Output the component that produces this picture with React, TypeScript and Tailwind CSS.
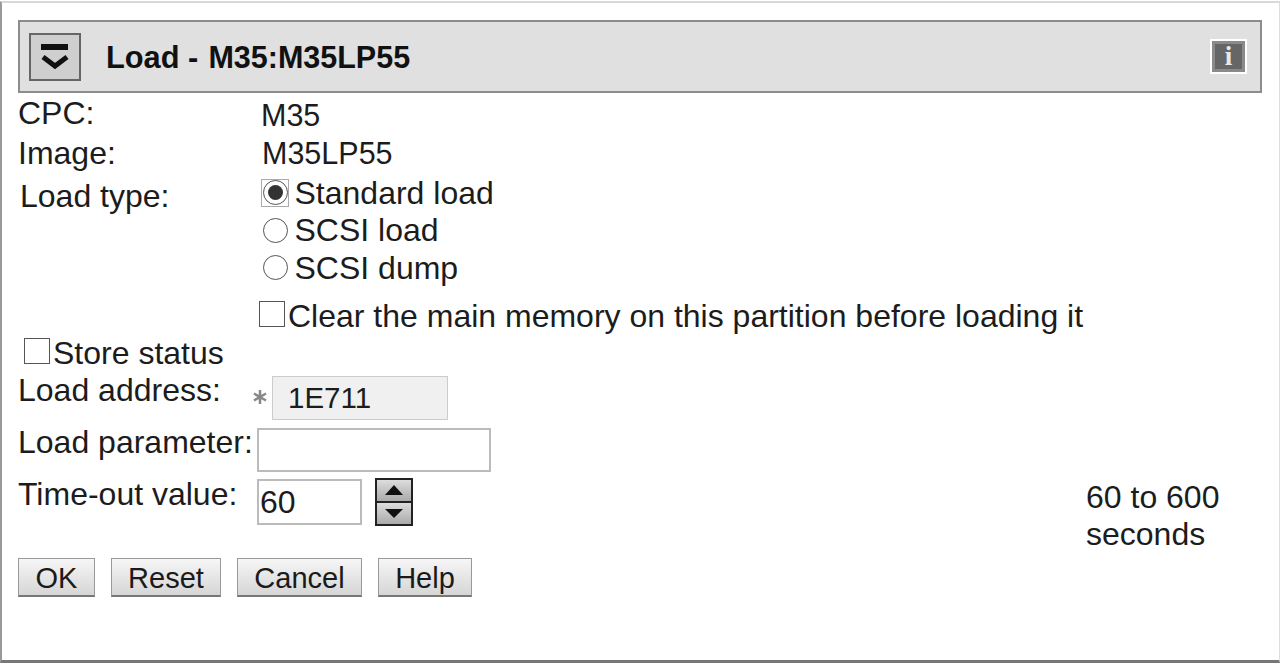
import type { ReactNode } from "react";

function Radio({ label, checked }: { label: string; checked?: boolean }) {
  return (
    <div className="flex h-[37.5px] items-center">
      <span className={`flex h-[28px] w-[28px] items-center justify-center border ${checked ? "border-[#aaa]" : "border-transparent"}`}>
        <span className="flex h-[25px] w-[25px] items-center justify-center rounded-full border-[1.5px] border-[#555] bg-white">
          {checked && <span className="h-[15px] w-[15px] rounded-full bg-[#333]" />}
        </span>
      </span>
      <span className="ml-[5.5px]">{label}</span>
    </div>
  );
}

function Check({ label }: { label: string }) {
  return (
    <div className="flex items-center">
      <span className="h-[26px] w-[26px] -translate-y-[2px] border-[1.5px] border-[#555] bg-white" />
      <span className="ml-[3px]">{label}</span>
    </div>
  );
}

function Label({ children, width = "w-[239px]" }: { children: ReactNode; width?: string }) {
  return <span className={`shrink-0 ${width}`}>{children}</span>;
}

function ActionButton({ label, width }: { label: string; width: string }) {
  return (
    <button
      type="button"
      className={`h-[39px] ${width} border border-[#999] border-b-2 border-b-[#777] bg-gradient-to-b from-[#f6f6f6] to-[#d6d6d6] pt-[3px] text-[29px] leading-none text-[#1a1a1a]`}
    >
      {label}
    </button>
  );
}

export default function App() {
  return (
    <div className="h-[665px] w-[1280px] overflow-hidden bg-white font-['Liberation_Sans',Arial,sans-serif] text-[32px] leading-none text-[#1c1c1c]">
      <div className="mt-[1px] h-[662px] border-t-2 border-b-[3px] border-l-2 border-r border-t-[#d8d8d8] border-b-[#777] border-l-[#999] border-r-[#ddd] pl-[16px]">
        {/* title bar */}
        <div className="mt-[17px] flex h-[73px] w-[1244px] items-center border-2 border-[#8c8c8c] bg-[#e0e0e0] pr-[13px] pl-[9px]">
          <span className="flex h-[48px] w-[52px] items-center justify-center border-2 border-[#666] bg-[#cfcfcf]">
            <svg width="30" height="26" viewBox="0 0 30 26">
              <rect x="1" y="0" width="27" height="6" fill="#111" />
              <path d="M3 13 L15 22 L27 13" fill="none" stroke="#111" strokeWidth="5" />
            </svg>
          </span>
          <span className="ml-[25px] flex items-baseline pt-[2px] font-bold text-[#111]">
            <span className="text-[30.8px]">Load -</span>
            <span className="ml-[10px] text-[30.5px]">M35:M35LP55</span>
          </span>
          <span className="ml-auto flex h-[35px] w-[37px] items-center justify-center border-2 border-white bg-[#666] outline-[3px] -outline-offset-[5px] outline-[#8a8a8a]">
            <span className="font-['Liberation_Serif',serif] text-[27px] font-bold text-[#e8e8e8]">i</span>
          </span>
        </div>

        {/* CPC / image */}
        <div className="flex h-[40px] items-center">
          <Label width="w-[243px]">CPC:</Label>
          <span className="mt-[4px] text-[30.5px]">M35</span>
        </div>
        <div className="flex h-[36px] items-center pt-[4px]">
          <Label width="w-[244px]">Image:</Label>
          <span className="text-[30.5px]">M35LP55</span>
        </div>

        {/* load type */}
        <div className="mt-[5px] flex pl-[2px]">
          <span className="w-[241px] shrink-0 pt-[6px]">Load type:</span>
          <div>
            <Radio label="Standard load" checked />
            <Radio label="SCSI load" />
            <Radio label="SCSI dump" />
          </div>
        </div>

        <div className="mt-[13px] pl-[241px]">
          <Check label="Clear the main memory on this partition before loading it" />
        </div>
        <div className="mt-[5px] pl-[6px]">
          <Check label="Store status" />
        </div>

        {/* load address */}
        <div className="mt-[7px] flex h-[44px]">
          <span className="-mt-[2px] w-[235px] shrink-0">Load address:</span>
          <span className="flex w-[19px] shrink-0 items-center justify-center pr-[5px] pb-[2px]">
            <svg width="14" height="14" viewBox="0 0 14 14" stroke="#888" strokeWidth="2.5">
              <path d="M7 0 V14 M1 3.5 L13 10.5 M13 3.5 L1 10.5" />
            </svg>
          </span>
          <div className="flex w-[176px] items-center border border-[#ccc] bg-[#f0f0f0] pl-[15px] text-[29.5px]">1E711</div>
        </div>

        {/* load parameter */}
        <div className="mt-[8px] flex h-[44px]">
          <span className="-mt-[2px] w-[239px] shrink-0">Load parameter:</span>
          <div className="h-full w-[234px] border-2 border-[#bbb] bg-white" />
        </div>

        {/* time-out */}
        <div className="mt-[7px] flex h-[46px]">
          <span className="-mt-[1px] w-[239px] shrink-0">Time-out value:</span>
          <div className="flex h-full w-[105px] items-center border-2 border-[#bbb] pl-[1px]">60</div>
          <div className="ml-[13px] flex h-[48px] w-[38px] -translate-y-[1px] flex-col border-2 border-[#222]">
            <span className="flex flex-1 items-center justify-center border-b-2 border-[#222] bg-gradient-to-b from-[#ddd] to-[#aaa]">
              <svg width="18" height="10" viewBox="0 0 18 10"><path d="M9 0 L18 10 H0 Z" fill="#111" /></svg>
            </span>
            <span className="flex flex-1 items-center justify-center bg-gradient-to-b from-[#ddd] to-[#aaa]">
              <svg width="18" height="9" viewBox="0 0 18 9"><path d="M0 0 H18 L9 9 Z" fill="#111" /></svg>
            </span>
          </div>
          <div className="ml-[673px] w-[150px] leading-[37px]">60 to 600 seconds</div>
        </div>

        {/* buttons */}
        <div className="mt-[33px] flex">
          <ActionButton label="OK" width="w-[77px]" />
          <span className="ml-[16px]"><ActionButton label="Reset" width="w-[110px]" /></span>
          <span className="ml-[16px]"><ActionButton label="Cancel" width="w-[125px]" /></span>
          <span className="ml-[16px]"><ActionButton label="Help" width="w-[94px]" /></span>
        </div>
      </div>
    </div>
  );
}
